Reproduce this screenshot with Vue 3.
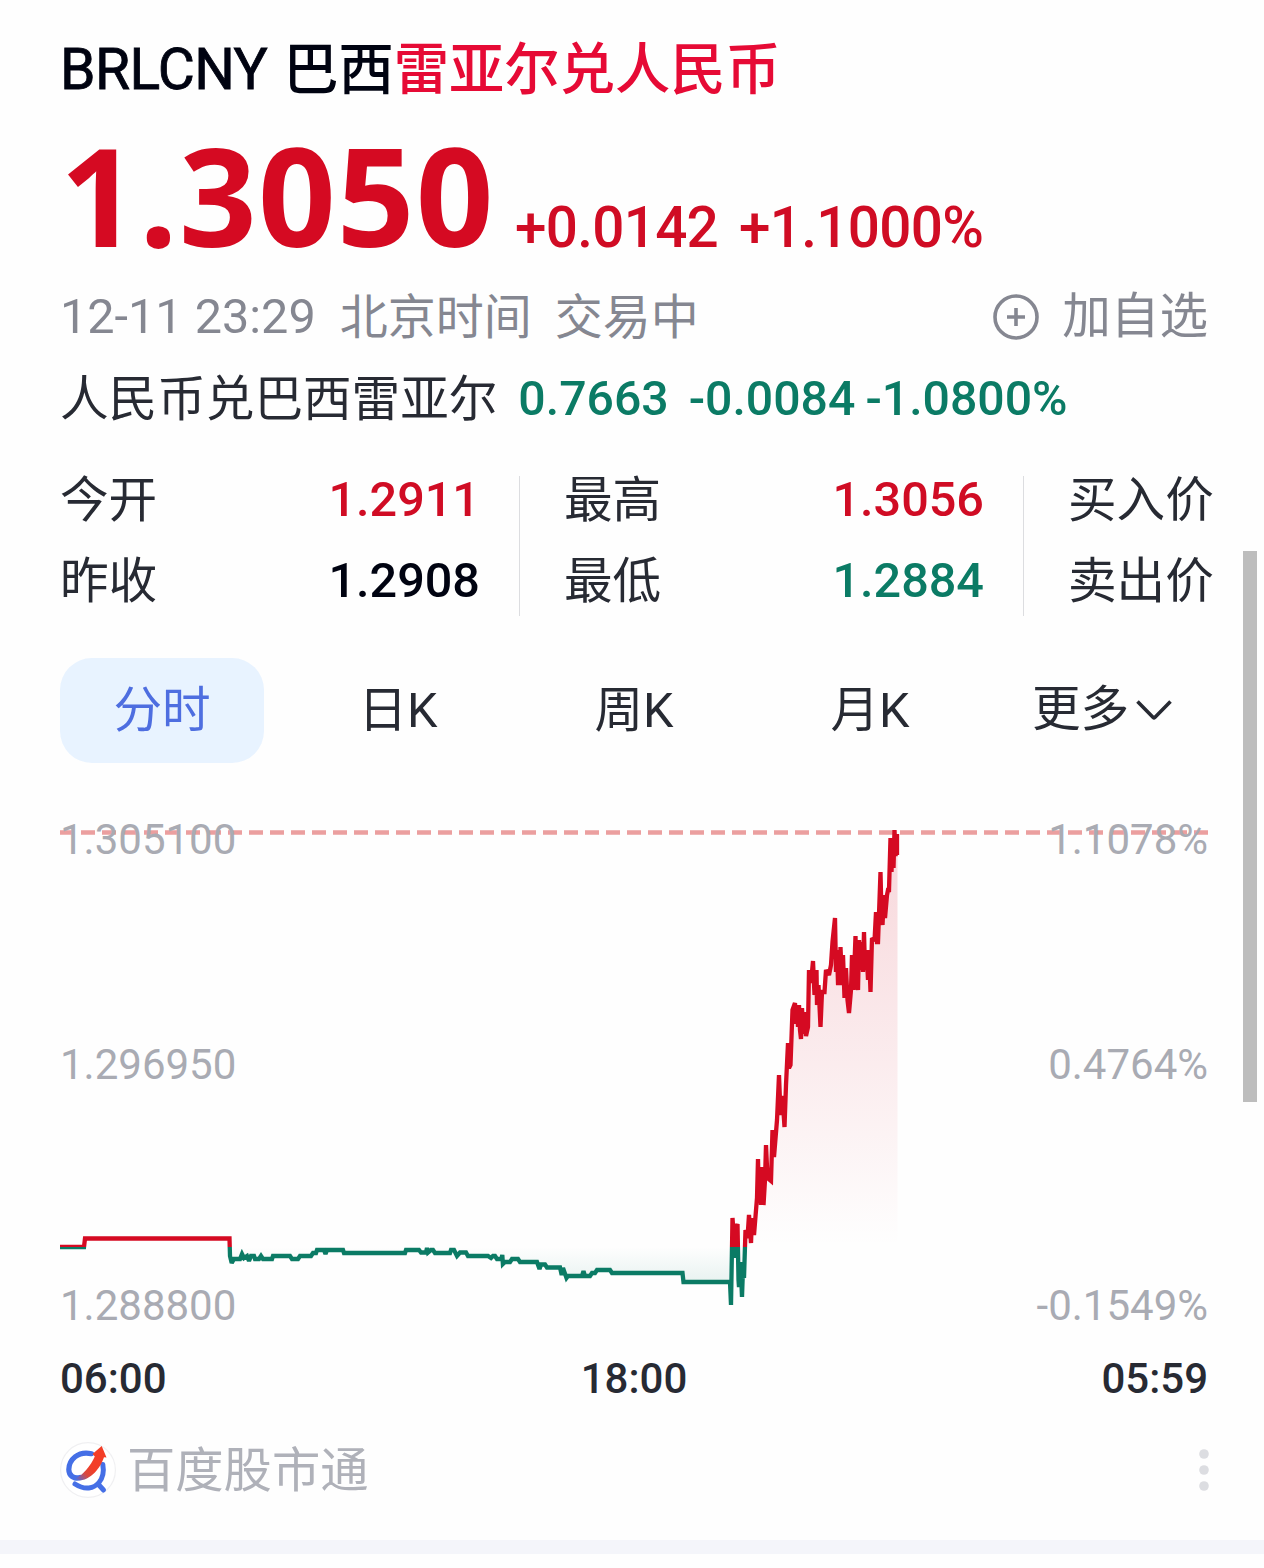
<script setup>
const stats = [
  {
    rows: [
      { label: '今开', value: '1.2911', tone: 'up' },
      { label: '昨收', value: '1.2908', tone: 'flat' }
    ]
  },
  {
    rows: [
      { label: '最高', value: '1.3056', tone: 'up' },
      { label: '最低', value: '1.2884', tone: 'down' }
    ]
  },
  { rows: [{ label: '买入价' }, { label: '卖出价' }] }
]

const tabs = ['分时', '日K', '周K', '月K']

const scale = [
  { price: '1.305100', percent: '1.1078%' },
  { price: '1.296950', percent: '0.4764%' },
  { price: '1.288800', percent: '-0.1549%' }
]

const points = [
  [60, 1247], [84, 1247], [85, 1238.5], [229.5, 1238.5], [230, 1256], [231.7, 1263], [234, 1259],
  [240, 1259], [242, 1254], [244, 1258], [247, 1256], [249, 1261], [251, 1256], [254, 1256],
  [255, 1259], [259, 1259], [261, 1256], [263, 1259], [272, 1259], [273, 1256], [290, 1256],
  [292, 1259], [298, 1259], [300, 1256], [311, 1256], [313, 1253], [316, 1253], [317, 1250],
  [324, 1250], [325.5, 1254], [327, 1250], [343, 1250], [344, 1253], [405, 1253], [406, 1250],
  [419, 1250], [421, 1252.5], [426, 1252.5], [427, 1248], [428, 1252.5], [431, 1250], [433, 1250],
  [435, 1253], [450, 1253], [451, 1250], [454, 1250], [457, 1256], [460, 1252.5], [466, 1252.5],
  [468, 1256], [488, 1256], [491, 1258], [493, 1256], [495, 1256], [497, 1259], [501.5, 1259],
  [502.3, 1255], [502.9, 1264], [505, 1262], [510, 1262], [512, 1259], [518, 1259], [520, 1262],
  [537, 1262], [539.5, 1269], [541, 1264.5], [545, 1264.5], [547, 1267.5], [560, 1267.5],
  [561.7, 1275], [563, 1268], [566.5, 1278], [568, 1276], [582, 1276], [583.5, 1271], [585, 1276],
  [590, 1276], [592, 1273], [595, 1273], [597, 1270], [610, 1270], [612, 1273], [682.5, 1273],
  [683.5, 1282], [730, 1282], [731, 1305], [732.5, 1218], [734, 1240], [735, 1258], [736, 1228],
  [737.5, 1224], [738.5, 1280], [739, 1287], [740.5, 1262], [742, 1297], [743, 1268], [744, 1278],
  [745.5, 1230], [747.5, 1238], [749, 1215], [751, 1243], [752, 1218], [754, 1235], [757, 1198],
  [758, 1159], [759, 1203], [760, 1167], [761, 1205], [762, 1167], [763.5, 1205], [765, 1180],
  [766, 1145], [767.5, 1178], [771, 1181], [772.5, 1130], [774, 1157], [777, 1120], [779, 1075],
  [780.5, 1115], [782.5, 1096], [784.5, 1127], [786, 1085], [788, 1043], [789, 1068], [790.5, 1065],
  [792.5, 1010], [795, 1003], [796, 1024], [797, 1005], [798, 1027], [799, 1005], [800, 1030],
  [801, 1039], [802, 1008], [803.5, 1034], [804.5, 1012], [806, 1036], [808, 1027], [809, 970],
  [811, 983], [813, 961], [814.5, 995], [816.5, 970], [817, 1005], [818.5, 985], [820.5, 1027],
  [822, 992], [824.5, 992], [826, 970], [829, 975], [831, 965], [832.5, 942], [835, 918],
  [836, 972], [837, 950], [838, 983], [840, 983], [840.5, 947], [842, 983], [843, 955],
  [844.5, 998], [846, 968], [847.5, 1000], [849, 1013], [851, 990], [852, 955], [853.5, 990],
  [855.5, 936], [856.5, 980], [858, 990], [859, 940], [860.5, 970], [861.5, 942], [863, 972],
  [864, 932], [865, 970], [866.5, 950], [868, 980], [869, 950], [870.5, 992], [872, 938],
  [874.5, 941], [876, 912], [877, 942], [878, 942], [880.5, 872], [881.5, 915], [882.5, 925],
  [884, 895], [885, 918], [887, 895], [888, 890], [889, 890], [890.5, 838], [891.5, 872],
  [892.5, 840], [893.5, 868], [894.5, 830], [895.5, 856], [897, 834], [897, 855]
]

const line = points.map((p) => p.join(',')).join(' ')
const area = `60,1247 ${line} 897.5,834 897.5,1247`
</script>

<template>
  <main class="page">
    <section class="card">
      <h1 class="title">
        <span class="code">BRLCNY</span>
        <span class="base">巴西</span><span class="hit">雷亚尔兑人民币</span>
      </h1>

      <div class="quote up">
        <span class="price">1.3050</span>
        <span class="diff">+0.0142</span>
        <span class="diff">+1.1000%</span>
      </div>

      <div class="meta">
        <span class="time">12-11 23:29</span>
        <span class="zone">北京时间</span>
        <span class="state">交易中</span>
        <button class="watch">
          <svg width="48" height="48" viewBox="0 0 48 48" fill="none" stroke="currentColor">
            <circle cx="24" cy="24" r="21" stroke-width="3.6" />
            <path d="M24 15v18M15 24h18" stroke-width="3.6" />
          </svg>
          <span>加自选</span>
        </button>
      </div>

      <div class="inverse">
        <span class="pair">人民币兑巴西雷亚尔</span>
        <span class="num n1">0.7663</span>
        <span class="num n2">-0.0084</span>
        <span class="num n3">-1.0800%</span>
      </div>

      <div class="stats">
        <div v-for="(col, i) in stats" :key="i" class="col">
          <div v-for="row in col.rows" :key="row.label" class="stat">
            <span class="label">{{ row.label }}</span>
            <span v-if="row.value" class="value" :class="row.tone">{{ row.value }}</span>
          </div>
        </div>
      </div>

      <nav class="tabs">
        <button v-for="(tab, i) in tabs" :key="tab" class="tab" :class="{ active: i === 0 }">{{ tab }}</button>
        <button class="tab more">
          <span>更多</span>
          <svg width="36" height="22" viewBox="0 0 36 22" fill="none" stroke="currentColor" stroke-width="3.6">
            <path d="M1.5 2.5 17.2 18.5Q18 19.2 18.8 18.5L34.5 2.5" />
          </svg>
        </button>
      </nav>

      <div class="chart">
        <svg class="plot" width="1148" height="510" viewBox="60 820 1148 510" fill="none">
          <defs>
            <clipPath id="above"><rect x="60" y="820" width="1148" height="427" /></clipPath>
            <clipPath id="below"><rect x="60" y="1247" width="1148" height="83" /></clipPath>
            <linearGradient id="rise" gradientUnits="userSpaceOnUse" x1="0" y1="832" x2="0" y2="1247">
              <stop offset="0" stop-color="#d50a22" stop-opacity=".16" />
              <stop offset=".55" stop-color="#d50a22" stop-opacity=".075" />
              <stop offset="1" stop-color="#d50a22" stop-opacity="0" />
            </linearGradient>
            <linearGradient id="fall" gradientUnits="userSpaceOnUse" x1="0" y1="1247" x2="0" y2="1305">
              <stop offset="0" stop-color="#0b7b65" stop-opacity="0" />
              <stop offset="1" stop-color="#0b7b65" stop-opacity=".15" />
            </linearGradient>
          </defs>
          <path d="M60 832.5H1208" stroke="#eb9f9f" stroke-width="4.4" stroke-dasharray="14 7" />
          <polygon :points="area" fill="url(#rise)" clip-path="url(#above)" />
          <polygon :points="area" fill="url(#fall)" clip-path="url(#below)" />
          <g stroke-width="4.3" stroke-linejoin="miter" stroke-miterlimit="2.6">
            <polyline :points="line" stroke="#d50a22" clip-path="url(#above)" />
            <polyline :points="line" stroke="#0b7b65" clip-path="url(#below)" />
          </g>
        </svg>
        <div class="scale">
          <div v-for="s in scale" :key="s.price" class="tick">
            <span>{{ s.price }}</span><span>{{ s.percent }}</span>
          </div>
        </div>
      </div>

      <div class="axis">
        <span>06:00</span><span>18:00</span><span>05:59</span>
      </div>

      <footer class="source">
        <svg class="logo" width="56" height="56" viewBox="0 0 56 56" fill="none">
          <defs>
            <linearGradient id="arrow" x1="16" y1="38" x2="42" y2="12" gradientUnits="userSpaceOnUse">
              <stop offset="0" stop-color="#456fe6" />
              <stop offset=".3" stop-color="#d9483f" />
              <stop offset=".55" stop-color="#f33e27" />
            </linearGradient>
          </defs>
          <circle cx="28" cy="28" r="27.4" fill="#fff" stroke="#f0f0f2" stroke-width="1.2" />
          <path d="M31.500 11.700C18 8.500 9 18 8.800 27.500C8.800 34 14 37 20 35.500" stroke="#456fe6" stroke-width="5.200" stroke-linecap="round" />
          <path d="M15 42C25 48.500 34 46.500 39 40.500C43.500 35 44 29 42.800 22.500M38 42L43.500 48" stroke="#456fe6" stroke-width="5" stroke-linecap="round" />
          <path d="M14 37C23 34 31 23 34.800 14.500L32.500 12L41.700 4L46.500 15.500L44 15.200C40 27 29 41 14 38.200Z" fill="url(#arrow)" />
        </svg>
        <span class="brand">百度股市通</span>
        <svg class="dots" width="10" height="44" viewBox="0 0 10 44" fill="#dcdde1">
          <circle cx="5" cy="6" r="4.800" /><circle cx="5" cy="22" r="4.800" /><circle cx="5" cy="38" r="4.800" />
        </svg>
      </footer>
    </section>
    <div class="band"></div>
    <div class="scrollbar"></div>
  </main>
</template>

<style>
body {
  background: #fff;
}
</style>

<style scoped>
.page {
  position: relative;
  width: 1264px;
  height: 1568px;
  overflow: hidden;
  background: #fefefe;
  color: #272a33;
  font-family: Roboto, 'Noto Sans CJK SC', sans-serif;
  font-size: 48.6px;
  white-space: nowrap;
}

.card {
  display: flex;
  flex-direction: column;
  box-sizing: border-box;
  height: 1540px;
  padding: 30px 56px 0 60px;
}

button {
  padding: 0;
  border: 0;
  background: none;
  color: inherit;
  font: inherit;
}

.up { color: #d00c24; }
.down { color: #0b7b65; }
.flat { color: #000311; }

.title {
  display: flex;
  height: 80px;
  margin: 0;
  color: #000311;
  font-size: 55.3px;
  font-weight: 500;
  line-height: 82px;
}

.code {
  margin-right: 16px;
  font-size: 57px;
  font-weight: 400;
  letter-spacing: -0.6px;
  line-height: 80px;
  -webkit-text-stroke: 0.8px currentColor;
}

.hit { color: #e60a35; }

.quote {
  display: flex;
  align-items: baseline;
  height: 168px;
  line-height: 170px;
}

.price {
  width: 455px;
  color: #d50a22;
  font-family: 'Open Sans', sans-serif;
  font-size: 136px;
  font-weight: 700;
  letter-spacing: 1.2px;
}

.diff {
  margin-right: 21px;
  font-size: 56.6px;
  font-weight: 500;
  letter-spacing: -0.7px;
}

.meta {
  display: flex;
  height: 78px;
  color: #858791;
  line-height: 78px;
}

.zone { margin: 0 23px 0 24px; }

.zone,
.state {
  font-size: 48px;
  line-height: 80px;
}

.watch {
  display: flex;
  align-items: center;
  gap: 22px;
  margin-left: auto;
}

.inverse {
  display: flex;
  height: 85px;
  line-height: 85px;
}

.pair { line-height: 87px; }

.num {
  color: #0b7b65;
  font-size: 48.2px;
  font-weight: 500;
}

.n1 { margin-left: 21px; }
.n2 { margin-left: 20px; }
.n3 { margin-left: 10px; }

.stats {
  display: flex;
  gap: 44px;
  margin-top: 18px;
}

.col {
  position: relative;
  flex: none;
  width: 460px;
}

.col:last-child { width: auto; }

.col:not(:last-child)::after {
  content: '';
  position: absolute;
  top: 17px;
  right: 0;
  width: 1px;
  height: 140px;
  background: #dcdde0;
}

.stat {
  display: flex;
  justify-content: space-between;
  height: 81px;
  padding-right: 40px;
  line-height: 81px;
}

.label { line-height: 83px; }

.value { font-weight: 500; }

.tabs {
  display: flex;
  justify-content: space-between;
  height: 105px;
  margin: 37px 0 0;
}

.tab {
  width: 204px;
  line-height: 103px;
}

.active {
  border-radius: 32px;
  background: #e8f3ff;
  color: #4e6ee0;
}

.more {
  display: flex;
  align-items: center;
  justify-content: center;
  gap: 7px;
  padding: 0 8px 2px 0;
}

.chart {
  display: grid;
  width: 1148px;
  height: 510px;
  margin-top: 57px;
}

.plot,
.scale {
  grid-area: 1 / 1;
}

.scale {
  display: flex;
  flex-direction: column;
  height: 510px;
  color: #a9abb3;
  font-size: 42px;
  line-height: 40px;
}

.tick {
  display: flex;
  justify-content: space-between;
}

.tick:nth-child(2) { margin: 185px 0 201px; }

.axis {
  display: flex;
  justify-content: space-between;
  width: 1148px;
  height: 80px;
  margin-top: 9px;
  font-size: 42px;
  font-weight: 500;
  line-height: 80px;
}

.source {
  display: flex;
  align-items: center;
  width: 1148px;
  height: 80px;
  margin-top: 11px;
  color: #afb1b9;
  line-height: 80px;
}

.brand {
  margin-left: 11px;
  padding-top: 2px;
  font-size: 48.3px;
}

.dots { margin: 0 -1px 0 auto; }

.band {
  height: 14px;
  background: #f4f5fa;
}

.scrollbar {
  position: absolute;
  top: 551px;
  right: 7px;
  width: 14px;
  height: 551px;
  background: #bdbdbd;
}
</style>
